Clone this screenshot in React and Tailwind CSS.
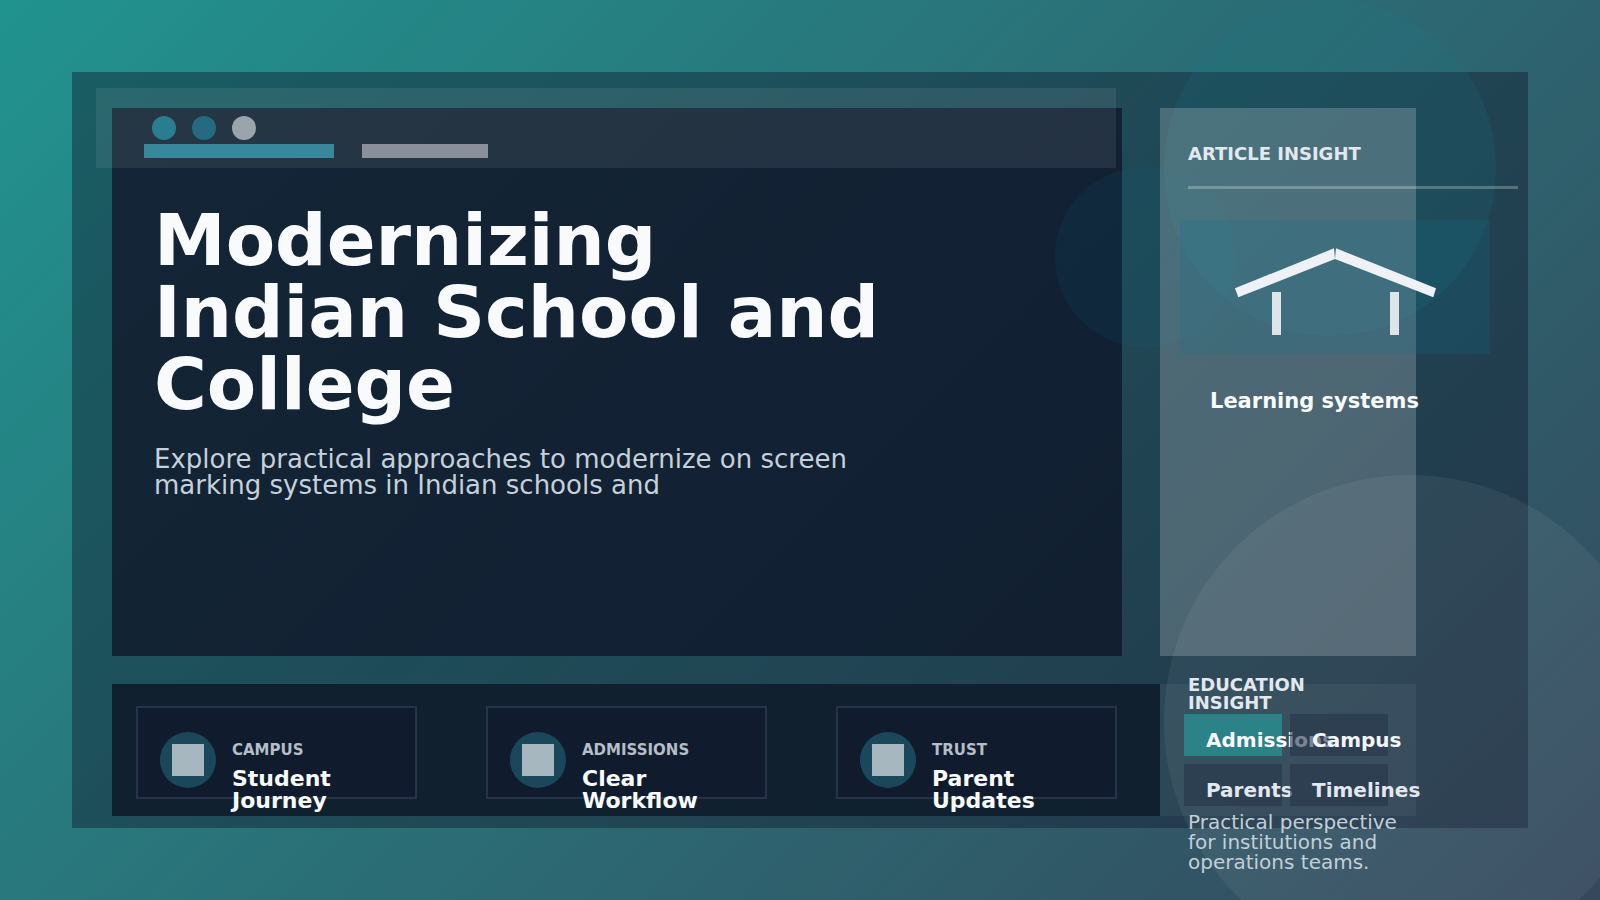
import React from 'react';

const cards = [
  { label: 'CAMPUS', title: ['Student', 'Journey'] },
  { label: 'ADMISSIONS', title: ['Clear', 'Workflow'] },
  { label: 'TRUST', title: ['Parent', 'Updates'] },
];

function RoofIcon() {
  return (
    <svg width="310" height="134" viewBox="0 0 310 134" className="block">
      <polygon points="55,68.3 58.3,77.2 155,39 154,28.3" fill="#eef2f6" />
      <polygon points="156,28.3 155,39 253.3,77.2 256,68.3" fill="#eef2f6" />
      <rect x="92" y="72" width="9" height="43" fill="#dde5e9" />
      <rect x="210" y="72" width="9" height="43" fill="#dde5e9" />
    </svg>
  );
}

function InfoCard({ label, title }) {
  return (
    <div className="w-[281px] h-[93px] shrink-0 border-2 border-[#25344a] bg-[#101b2d] pl-[22px] pt-6 flex gap-4">
      <div className="w-14 h-14 shrink-0 rounded-full bg-[#1b475b] flex items-center justify-center">
        <div className="w-8 h-8 bg-[#a6b7c0]" />
      </div>
      <div className="mt-[9px]">
        <div className="text-[15px] leading-[18px] font-bold text-[#b4bdc8]">{label}</div>
        <div className="mt-[9px] text-[22px] leading-[22px] font-bold text-[#f8fafc]">
          {title[0]}
          <br />
          {title[1]}
        </div>
      </div>
    </div>
  );
}

export default function App() {
  return (
    <div className="relative w-[1600px] h-[900px] overflow-hidden bg-[linear-gradient(135deg,#21938f,#35485c)] p-[72px] font-['DejaVu_Sans',sans-serif]">
      {/* outer panel */}
      <div className="relative h-[756px] bg-[#0f172a]/42 pl-10 pt-9">
        <div className="flex gap-[38px]">
          {/* hero */}
          <div className="w-[1010px] h-[548px] bg-[linear-gradient(135deg,#132536,#111f31)]">
            <div className="relative z-10 pl-10 pt-2 flex gap-4">
              <div className="w-6 h-6 rounded-full bg-[#287d91]" />
              <div className="w-6 h-6 rounded-full bg-[#246b7f]" />
              <div className="w-6 h-6 rounded-full bg-[#9ba3ac]" />
            </div>
            <div className="relative z-10 ml-8 mt-1 flex gap-7">
              <div className="w-[190px] h-3.5 bg-[#38879b]" />
              <div className="w-[126px] h-3.5 bg-[#8a909b]" />
            </div>
            <h1 className="ml-[42px] mt-[46px] w-[740px] text-[72px] leading-[72px] font-bold text-[#f8fafc]">
              Modernizing Indian School and College
            </h1>
            <p className="ml-[42px] mt-[26px] w-[760px] text-[26px] leading-[26px] text-[#c5d0da]">
              Explore practical approaches to modernize on screen marking systems in Indian schools and
            </p>
          </div>

          {/* article insight */}
          <div className="relative z-10 w-64 h-[548px] bg-white/20 pl-7 pt-[34px]">
            <div className="text-lg leading-6 font-bold text-[#e2e8f0]">ARTICLE INSIGHT</div>
            <div className="mt-[20px] w-[330px] h-[3px] bg-white/25" />
            <div className="-ml-2 mt-[31px] w-[310px] h-[134px] bg-[#0e7490]/20">
              <RoofIcon />
            </div>
            <div className="ml-[22px] mt-[35px] w-max text-[21px] leading-6 font-bold text-[#f8fafc]">Learning systems</div>
          </div>
        </div>

        <div className="mt-7 flex">
          {/* bottom cards */}
          <div className="w-[1048px] h-[132px] bg-[#11202f] pl-6 pt-[22px] flex gap-[69px]">
            {cards.map(c => (
              <InfoCard key={c.label} label={c.label} title={c.title} />
            ))}
          </div>

          {/* education insight */}
          <div className="relative z-10 w-64 h-[132px] bg-white/5 pl-7">
            <div className="-mt-2 w-40 text-lg leading-[18px] font-bold text-[#e2e8f0]">EDUCATION INSIGHT</div>
            <div className="-ml-1 mt-0.5 grid grid-cols-[98px_98px] gap-x-2 gap-y-2">
              <div className="h-[42px] bg-[#2b8287] pl-[22px] pt-4 text-xl leading-5 font-bold text-[#f8fafc] whitespace-nowrap">Admissions</div>
              <div className="h-[42px] bg-[#26354a]/60 pl-[22px] pt-4 text-xl leading-5 font-bold text-[#f1f5f9] whitespace-nowrap">Campus</div>
              <div className="h-[42px] bg-[#26354a]/60 pl-[22px] pt-4 text-xl leading-5 font-bold text-[#e2e8f0] whitespace-nowrap">Parents</div>
              <div className="h-[42px] bg-[#26354a]/60 pl-[22px] pt-4 text-xl leading-5 font-bold text-[#e2e8f0] whitespace-nowrap">Timelines</div>
            </div>
            <p className="mt-1.5 w-[228px] text-xl leading-5 text-[#c2cfd8]">
              Practical perspective for institutions and operations teams.
            </p>
          </div>
        </div>

        {/* strip across the top of the hero */}
        <div className="absolute left-6 top-4 w-[1020px] h-20 bg-white/8" />
      </div>

      {/* background circles */}
      <div className="absolute z-[1] left-[1164px] top-0 w-[332px] h-[336px] rounded-full bg-[#14808c]/15" />
      <div className="absolute z-[1] left-[1055px] top-[167px] w-[180px] h-[180px] rounded-full bg-[#0e7490]/10" />
      <div className="absolute z-[1] left-[1164px] top-[475px] w-[492px] h-[492px] rounded-full bg-white/6" />
    </div>
  );
}
